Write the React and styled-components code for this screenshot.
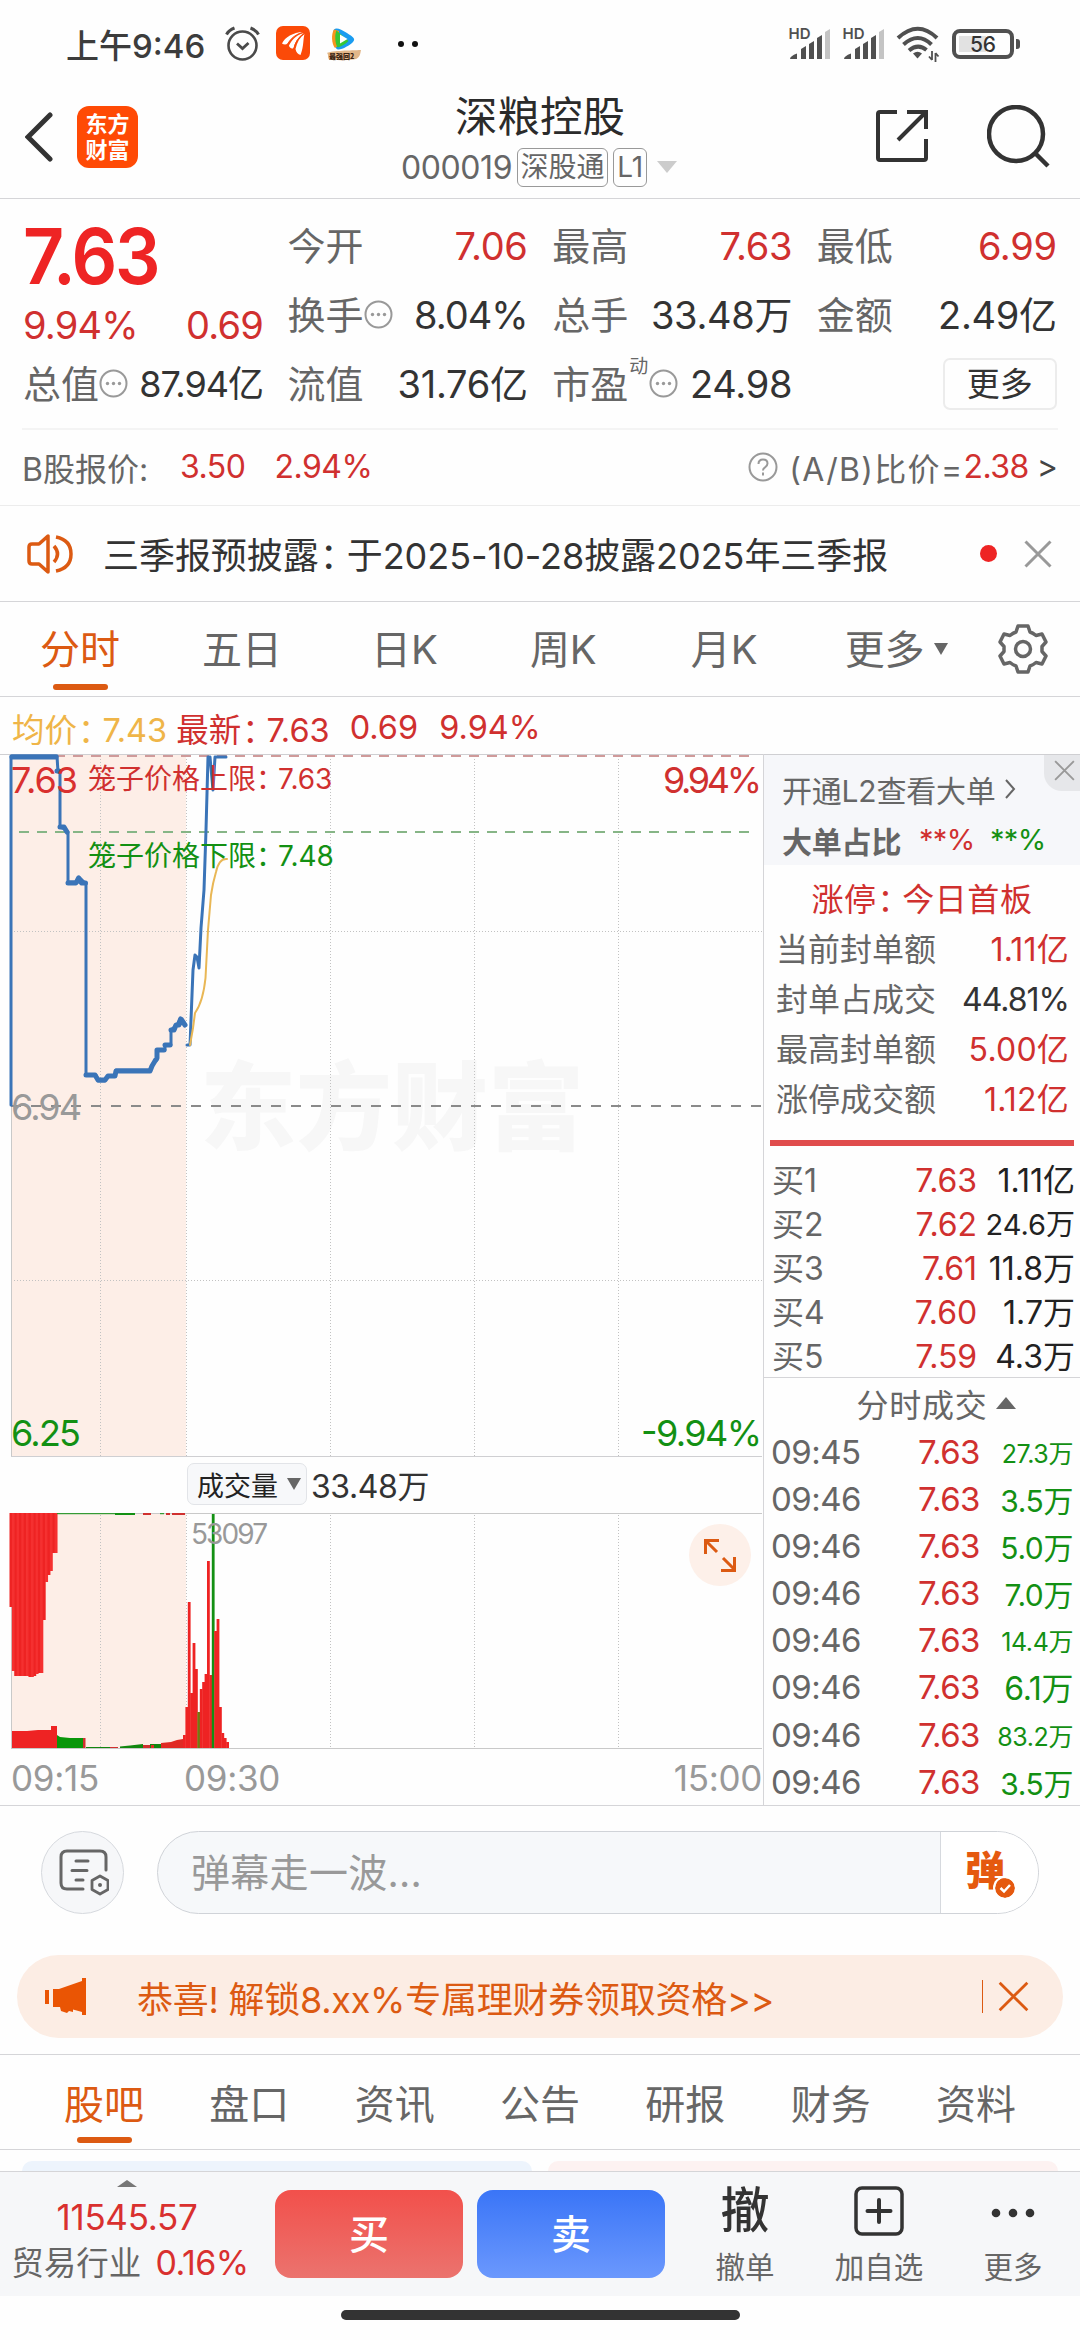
import React from "react";
import styled, { createGlobalStyle, css } from "styled-components";

const RED = "#d0302f";
const GREEN = "#139013";
const ORANGE = "#dc5a12";
const DARK = "#333333";
const GRAY = "#666666";
const LIGHT = "#999999";
const LINE = "#d5d5d8";

const quoteColumns = [
  [
    { label: "今开", value: "7.06", color: RED },
    { label: "换手", value: "8.04%", info: true, tight: true },
    { label: "流值", value: "31.76亿" }
  ],
  [
    { label: "最高", value: "7.63", color: RED },
    { label: "总手", value: "33.48万" },
    { label: "市盈", value: "24.98", info: true, sup: "动" }
  ]
];

const periodTabs = [
  { name: "分时", left: 40, active: true },
  { name: "五日", left: 82 },
  { name: "日K", left: 89 },
  { name: "周K", left: 92 },
  { name: "月K", left: 94 }
];

const sealRows = [
  { label: "当前封单额", value: "1.11亿", color: RED },
  { label: "封单占成交", value: "44.81%", color: DARK, tight: true },
  { label: "最高封单额", value: "5.00亿", color: RED },
  { label: "涨停成交额", value: "1.12亿", color: RED }
];

const buyRows = [
  { label: "买1", price: "7.63", amount: "1.11亿" },
  { label: "买2", price: "7.62", amount: "24.6万", small: true },
  { label: "买3", price: "7.61", amount: "11.8万" },
  { label: "买4", price: "7.60", amount: "1.7万" },
  { label: "买5", price: "7.59", amount: "4.3万" }
];

const tradeRows = [
  { time: "09:45", amount: "27.3万", size: 25 },
  { time: "09:46", amount: "3.5万", size: 30 },
  { time: "09:46", amount: "5.0万", size: 30 },
  { time: "09:46", amount: "7.0万", size: 30 },
  { time: "09:46", amount: "14.4万", size: 25 },
  { time: "09:46", amount: "6.1万", size: 32 },
  { time: "09:46", amount: "83.2万", size: 25 },
  { time: "09:46", amount: "3.5万", size: 30 }
];

const infoTabs = ["股吧", "盘口", "资讯", "公告", "研报", "财务", "资料"];

// [x, top] of the volume bars after the open
const volumeBars = [
  [183, 222],
  [185.4, 194],
  [187.8, 89],
  [190.2, 180],
  [192.6, 130],
  [195, 156],
  [197.4, 199, "#6f7d12"],
  [199.8, 176],
  [202.2, 169],
  [204.6, 161],
  [207, 48],
  [209.4, 162],
  [211.8, 1, GREEN],
  [214.2, 118],
  [216.6, 106],
  [219, 194],
  [221.4, 220],
  [223.8, 225],
  [226.2, 229]
];

// auction bars hanging from the top of the volume chart
const auctionBars = [94, 158, 163, 163, 163, 163, 163, 163, 164, 164, 163, 161, 160, 160, 107, 69, 62, 58, 40, 40];

const gridX = [100, 186, 330, 474, 618];

export default function App() {
  return (
    <Page>
      <GlobalStyle />
      <StatusBar />
      <Header />
      <Quote />
      <Notice />
      <PeriodTabs />
      <ChartSection />
      <Barrage />
      <Banner />
      <InfoTabs />
      <BottomBar />
      <HomeArea>
        <HomeIndicator />
      </HomeArea>
    </Page>
  );
}

const StatusBar = () => (
  <StatusRow>
    <Clock>上午9:46</Clock>
    <StatusIcons>
      <svg width="35" height="35" viewBox="0 0 35 35" fill="none" stroke="#4a4a4a">
        <circle cx="17.5" cy="19.5" r="14" strokeWidth="2.6" />
        <path d="M12 17.5l5.5 5 6-5.5" strokeWidth="2.8" />
        <path d="M1.500 8.500Q4 4 9.500 2M33.500 8.500Q31 4 25.500 2" strokeWidth="3" />
      </svg>
      <svg width="34" height="34" viewBox="0 0 34 34">
        <rect width="34" height="34" rx="7" fill="#fb4a08" />
        <path d="M6 17.500C9 11 17 6.500 27 6c-6 2-12 6-15.500 11.500-1.500 1.500-4 1-5.500 0z" fill="#fff" />
        <path d="M13 19.500C16 13 22 8 28 7c-5 3.500-8.500 8-10.500 15-1.500 1.500-4.500-.5-4.500-2.500z" fill="#fff" />
        <path d="M19.500 23C21 16 24 11 28.500 8c-1.500 5-.5 12-4 21-2.500-.5-4.500-3-5-6z" fill="#fff" />
        <path d="M27 6.500Q16 9 11.500 18.500M28.300 7.500Q20 12 17.800 23" fill="none" stroke="#fb4a08" strokeWidth="1" />
      </svg>
      <svg width="36" height="36" viewBox="0 0 36 36">
        <path d="M8 3.500C10 1 15 3 21 7c6 4 9 5.500 6 9-3 3-11 8-15 7.500S5.500 8 8 3.500z" fill="#1a9cf0" />
        <path d="M8 3.500C5 8 5.500 18 9 22l4-3V5z" fill="#f7941d" />
        <path d="M10.500 4.500c-2 4-1.500 13 1 17 4-1 8-3.500 11-6.500z" fill="#35c635" />
        <path d="M14 8.500v9l7.500-4.500z" fill="#fff" />
        <path d="M1 27c5-2.500 24-2.500 34-3-1 6-2 9-8 9.500-8 1-20 1-24-.5C1 31.500 3 29 1 27z" fill="#e2b789" />
        <text x="3" y="32.500" fontSize="7" fontWeight="900" fill="#3b2412" fontFamily="Noto Sans CJK SC">
          最强回2
        </text>
      </svg>
    </StatusIcons>
    <StatusDots>
      <i />
      <i />
    </StatusDots>
    <StatusRight>
      <Signal />
      <Signal />
      <svg width="44" height="36" viewBox="0 0 44 36" fill="none" stroke="#505050" strokeWidth="4">
        <path d="M2 12Q22-6.500 41 12" />
        <path d="M7.500 18.500Q22 5.500 35.500 18.500" />
        <path d="M13 24.500Q22 17 30.500 24" />
        <path d="M17 27.500q4.500-3.500 9 0l-4.500 5z" fill="#505050" stroke="none" />
        <path d="M36 25v9M39.500 36v-9M36 34l-3-3.500M39.500 27l3 3.500" strokeWidth="1.800" />
      </svg>
      <BatteryWrap>
        <Battery>
          <BatteryLevel />
          <span>56</span>
        </Battery>
        <BatteryTip />
      </BatteryWrap>
    </StatusRight>
  </StatusRow>
);

const Signal = () => (
  <SignalSvg width="42" height="39" viewBox="-1 -6 42 39">
    <text x="-0.5" y="11" fontSize="15" fontWeight="600" fill="#505050" fontFamily="Inter">
      HD
    </text>
    <g fill="#505050">
      <path d="M1 31q0-3 7-5.500v5.500z" />
      <path d="M12 21l5-3v13h-5z" />
      <path d="M20 16l5-3v18h-5z" />
      <path d="M28 10l5-3v24h-5z" />
    </g>
    <path d="M36 4l5-3v30h-5z" fill="#c4c4c4" />
  </SignalSvg>
);

const Header = () => (
  <HeaderRow>
    <HeaderLeft>
      <svg width="28" height="50" viewBox="0 0 28 50" fill="none" stroke={DARK} strokeWidth="5" strokeLinecap="round">
        <path d="M25 3L3 25l22 22" />
      </svg>
      <Logo>
        <span>东方</span>
        <span>财富</span>
      </Logo>
    </HeaderLeft>
    <HeaderCenter>
      <StockName>深粮控股</StockName>
      <StockCode>
        <span>000019</span>
        <Tag $w={91}>深股通</Tag>
        <Tag $w={34}>L1</Tag>
        <Triangle $size={10} $h={12} $color="#cccccc" />
      </StockCode>
    </HeaderCenter>
    <HeaderRight>
      <svg width="54" height="54" viewBox="0 0 54 54" fill="none" stroke={DARK} strokeWidth="4">
        <path d="M22 3H5Q3 3 3 5V49Q3 51 5 51H49Q51 51 51 49V30" />
        <path d="M32 3H51V20M51 3L23 31" />
      </svg>
      <svg width="64" height="64" viewBox="0 0 64 64" fill="none" stroke={DARK} strokeWidth="4.500">
        <circle cx="29" cy="29" r="27" />
        <path d="M48 48L61 61" />
      </svg>
    </HeaderRight>
  </HeaderRow>
);

const MoreInfo = () => (
  <svg width="29" height="29" viewBox="0 0 29 29">
    <circle cx="14.500" cy="14.500" r="13" fill="none" stroke="#999" strokeWidth="2" />
    <circle cx="8.500" cy="14.500" r="1.700" fill="#999" />
    <circle cx="14.500" cy="14.500" r="1.700" fill="#999" />
    <circle cx="20.500" cy="14.500" r="1.700" fill="#999" />
  </svg>
);

const Quote = () => (
  <QuoteBox>
    <QuoteGrid>
      <PriceCol>
        <BigPrice>7.63</BigPrice>
        <Change>
          <span>9.94%</span>
          <span>0.69</span>
        </Change>
        <Metric>
          <Label>
            总值
            <MoreInfo />
          </Label>
          <Value $size={36} $tight>
            87.94亿
          </Value>
        </Metric>
      </PriceCol>
      {quoteColumns.map((col, i) => (
        <MetricCol key={i}>
          {col.map(e => (
            <Metric key={e.label}>
              <Label>
                {e.label}
                {e.sup && <Sup>{e.sup}</Sup>}
                {e.info && <MoreInfo />}
              </Label>
              <Value $color={e.color} $tight={e.tight}>
                {e.value}
              </Value>
            </Metric>
          ))}
        </MetricCol>
      ))}
      <MetricCol>
        <Metric>
          <Label>最低</Label>
          <Value $color={RED}>6.99</Value>
        </Metric>
        <Metric>
          <Label>金额</Label>
          <Value>2.49亿</Value>
        </Metric>
        <Metric $end>
          <MoreButton>更多</MoreButton>
        </Metric>
      </MetricCol>
    </QuoteGrid>
    <BShare>
      <BName>B股报价:</BName>
      <BValue $left={30}>3.50</BValue>
      <BValue $left={29}>2.94%</BValue>
      <BRight>
        <svg width="30" height="30" viewBox="0 0 30 30" fill="none" stroke="#999" strokeWidth="2">
          <circle cx="15" cy="15" r="13.500" />
          <path d="M10.500 12q0-4.500 4.500-4.500t4.500 4q0 2.200-2.500 3.800-2 1.200-2 3.200M15 20.500v3" />
        </svg>
        <b>(A/B)比价=</b>
        <em>2.38</em>
        <span>&gt;</span>
      </BRight>
    </BShare>
  </QuoteBox>
);

const Notice = () => (
  <NoticeRow>
    <svg width="48" height="42" viewBox="0 0 48 42" fill="none" stroke={ORANGE} strokeWidth="3.500" strokeLinejoin="round">
      <path d="M21 3v36l-9-8H5q-3 0-3-3V14q0-3 3-3h7z" />
      <path d="M27 13q7 8 0 16" />
      <path d="M29 4q15 3 15 17T29 38" />
    </svg>
    <NoticeText>
      三季报预披露<Colon>：</Colon>于2025-10-28披露2025年三季报
    </NoticeText>
    <RedDot />
    <CloseIcon size={28} color="#999" width={3} />
  </NoticeRow>
);

const CloseIcon = ({ size, color, width }) => (
  <svg width={size} height={size} viewBox="0 0 28 28" fill="none" stroke={color} strokeWidth={width}>
    <path d="M1.500 1.500L26.500 26.500M26.500 1.500L1.500 26.500" />
  </svg>
);

const PeriodTabs = () => (
  <PeriodRow>
    {periodTabs.map(e => (
      <PeriodTab key={e.name} $left={e.left} $active={e.active}>
        {e.name}
      </PeriodTab>
    ))}
    <PeriodTab $left={87}>更多</PeriodTab>
    <TriangleBox>
      <Triangle $size={7.5} $h={12} $color={GRAY} />
    </TriangleBox>
    <Gear width="50" height="52" viewBox="0 0 50 52" fill="none" stroke={GRAY} strokeWidth="3.500" strokeLinejoin="round">
      <path d="M20 3h10l2 6q3 1 6 3.500l6-1.500 4 8-4 4.500v5l4 4.500-4 8-6-1.500q-3 2.500-6 3.500l-2 6H20l-2-6q-3-1-6-3.500L6 41l-4-8 4-4.500v-5L2 19l4-8 6 1.500Q15 10 18 9z" />
      <circle cx="25" cy="26" r="7.500" />
    </Gear>
  </PeriodRow>
);

const ChartSection = () => (
  <>
    <Legend>
      <LegendText $color="#efb548">
        均价<Colon>：</Colon>7.43
      </LegendText>
      <LegendText $color={RED} $left={9}>
        最新<Colon>：</Colon>7.63
      </LegendText>
      <LegendText $color={RED} $left={20}>
        0.69
      </LegendText>
      <LegendText $color={RED} $left={21}>
        9.94%
      </LegendText>
    </Legend>
    <ChartRow>
      <ChartCol>
        <PriceChart />
        <VolumeHeader>
          <VolumeSelect>
            成交量
            <Triangle $size={7} $h={12} $color={GRAY} />
          </VolumeSelect>
          <VolumeTotal>33.48万</VolumeTotal>
        </VolumeHeader>
        <VolumeChart />
        <TimeAxis>
          <span>09:15</span>
          <span>09:30</span>
          <span>15:00</span>
        </TimeAxis>
      </ChartCol>
      <SidePanel />
    </ChartRow>
  </>
);

// svg y is measured from the top border of the chart (0 = upper limit, 351 = previous close)
const PriceChart = () => (
  <ChartSvg width="763" height="703" viewBox="0 0 763 703">
    <rect x="11" y="0" width="175" height="702" fill="#fdeee7" />
    <text x="200" y="388" fontSize="96" fontWeight="900" fill="#f7f7f7">
      东方财富
    </text>
    <g stroke="#c2c2c2" strokeWidth="1" strokeDasharray="1 2">
      {gridX.map(x => (
        <path key={x} d={`M${x + 0.5} 2V702`} />
      ))}
      <path d="M14 177.500H762M14 526.500H762" />
    </g>
    <path d="M11.500 2V702" stroke="#c9c9c9" />
    <path d="M0 .5H763M11 702.500H762" stroke="#cfcfd2" />
    <path d="M11 352H762" stroke="#8a8a8a" strokeWidth="2" strokeDasharray="10 10" />
    <path d="M19 2H750" stroke="#cf9a9a" strokeWidth="2" strokeDasharray="10 8" />
    <path d="M19 78H750" stroke="#86b586" strokeWidth="2" strokeDasharray="10 8" />
    <g fill="none" stroke="#3a74b8" strokeLinejoin="round" strokeLinecap="round">
      <path
        d="M11 351V2H57L58 18H60V73L65 75L68 78V128H78L79 123L86 130V321H96L98 327H105L108 322H115L116 316H150L155 307L157 306V296H165V291H171V276L177 271L180 264L185 271"
        strokeWidth="3"
      />
      <path
        d="M12 3H56M57 17h2M60 73h4l3 5M68 129h8l2.500-5 3 5h4M86 321h9l3 5h7l3-4h7l1-5h34l2-5 3-5 2-3V296h7M165 291h5M171 276h3l2-5h3l2-6 4 6"
        strokeWidth="5"
      />
      <path d="M187 291H190L193 216L195 201L197 203L199 214L201 174L204 136L206 76L208 3H210L213 36L215 3H226" strokeWidth="3" />
      <path d="M190 291L193 274L195 259Q203 248 205.500 224L208 176L211 141Q213 128 216 118Q219 104 227 105" stroke="#e9b755" strokeWidth="2" />
    </g>
    <text x="11" y="39" fontSize="36" fill="#d9302f" textLength="67">
      7.63
    </text>
    <text x="663" y="39" fontSize="36" fill={RED} textLength="99">
      9.94%
    </text>
    <text x="88" y="35" fontSize="28" fill={RED}>
      笼子价格上限<tspan className="colon">：</tspan>
      <tspan dx="8">7.63</tspan>
    </text>
    <text x="88" y="112" fontSize="28" fill={GREEN}>
      笼子价格下限<tspan className="colon">：</tspan>
      <tspan dx="8">7.48</tspan>
    </text>
    <text x="11" y="366" fontSize="36" fill="#999" textLength="71">
      6.94
    </text>
    <text x="11" y="692" fontSize="36" fill={GREEN} textLength="70">
      6.25
    </text>
    <text x="641" y="692" fontSize="36" fill={GREEN} textLength="121">
      -9.94%
    </text>
  </ChartSvg>
);

const VolumeChart = () => (
  <ChartSvg width="763" height="236" viewBox="0 0 763 236">
    <rect x="11" y="0" width="175" height="235" fill="#fdeee7" />
    <g stroke="#c2c2c2" strokeWidth="1" strokeDasharray="1 2">
      {gridX.map(x => (
        <path key={x} d={`M${x + 0.5} 2V235`} />
      ))}
    </g>
    <path d="M11.500 0V235M11 .5H762M11 235.500H762" stroke="#c9c9c9" />
    {auctionBars.map((h, i) => (
      <rect key={i} x={9.5 + i * 2.37} y="0" width="3" height={h} fill={i % 2 ? "#f53030" : "#ee2323"} />
    ))}
    <path d="M57 .7h58M160 .7h4" stroke={GREEN} />
    <path d="M115 1h20" stroke={GREEN} strokeWidth="2" />
    <path d="M143 1h8M166 1h4M172 1h13" stroke={RED} strokeWidth="2" />
    <path d="M12 235V218H27L38 217H51V213H57V235z" fill="#ee2323" />
    <path d="M57 235V222l3 2 10 1h13v10z" fill="#09960a" />
    <path d="M83 225h2.500v10H83zM110 234h8v1h-8zM143 235v-3h7v3z" fill={RED} />
    <path d="M86 235v-1h24v1zM120 235v-1.500l10-1 13-1.500v4zM150 235v-4h11v4z" fill="#12860f" />
    <path d="M151 235v-3h3v3zM161 235v-5l10-1 6-2 6-1v9z" fill="#e02a24" />
    {volumeBars.map(([x, y, color]) => (
      <rect key={x} x={x} y={y} width="2.8" height={235 - y} fill={color || "#ee2323"} />
    ))}
    <text x="191" y="31" fontSize="28" fill="#999" textLength="77">
      53097
    </text>
    <circle cx="720" cy="42" r="31" fill="#fdf0e9" />
    <path d="M717 39L706 28M705.500 41V27.500H719M723 45L734 56M721 57.500H734.500V44" fill="none" stroke={ORANGE} strokeWidth="3" />
  </ChartSvg>
);

const SidePanel = () => (
  <Side>
    <LevelTwo>
      <LevelLine>
        开通L2查看大单
        <svg width="12" height="20" viewBox="0 0 12 20" fill="none" stroke={GRAY} strokeWidth="2">
          <path d="M2 1l8 9-8 9" />
        </svg>
      </LevelLine>
      <LevelLine>
        <b>大单占比</b>
        <Ratio $color={RED}>**%</Ratio>
        <Ratio $color={GREEN}>**%</Ratio>
      </LevelLine>
      <CloseBadge>
        <CloseIcon size={21} color="#999" width={2.5} />
      </CloseBadge>
    </LevelTwo>
    <SealTitle>
      涨停<Colon>：</Colon>今日首板
    </SealTitle>
    {sealRows.map(e => (
      <SealRow key={e.label}>
        <span>{e.label}</span>
        <SealValue $color={e.color} $tight={e.tight}>
          {e.value}
        </SealValue>
      </SealRow>
    ))}
    <RedBar />
    {buyRows.map(e => (
      <BuyRow key={e.label}>
        <span>{e.label}</span>
        <BuyPrice>{e.price}</BuyPrice>
        <BuyAmount $small={e.small}>{e.amount}</BuyAmount>
      </BuyRow>
    ))}
    <TradeTitle>
      分时成交
      <Triangle $up $size={10} $h={12} $color={GRAY} />
    </TradeTitle>
    {tradeRows.map((e, i) => (
      <TradeRow key={i}>
        <span>{e.time}</span>
        <TradePrice>7.63</TradePrice>
        <TradeAmount $size={e.size}>{e.amount}</TradeAmount>
      </TradeRow>
    ))}
  </Side>
);

const Barrage = () => (
  <BarrageRow>
    <RoundButton>
      <svg width="50" height="48" viewBox="0 0 50 48" fill="none" stroke={GRAY} strokeWidth="3" strokeLinecap="round">
        <path d="M24 40H8q-6 0-6-6V8q0-6 6-6H41q6 0 6 6V21" />
        <path d="M17 12H29M13 21.500H28M17 31H24" />
        <path d="M41 27l8 4.500v9L41 45l-8-4.500v-9z" strokeWidth="2.800" strokeLinejoin="round" />
        <circle cx="41" cy="36" r="2" fill={GRAY} stroke="none" />
      </svg>
    </RoundButton>
    <BarrageInput>
      <Placeholder>弹幕走一波...</Placeholder>
      <BarrageToggle>
        弹
        <svg width="20" height="20" viewBox="0 0 20 20">
          <circle cx="10" cy="10" r="10" fill="#e5590f" />
          <path d="M5.500 10l3.500 3.500 6-6.500" fill="none" stroke="#fff" strokeWidth="2.500" />
        </svg>
      </BarrageToggle>
    </BarrageInput>
  </BarrageRow>
);

const Banner = () => (
  <BannerBox>
    <svg width="42" height="38" viewBox="0 0 42 38" fill="#ea5504">
      <path d="M0 12h4v14H0zM8 11h6L37 3V0h4v37h-4v-3l-9-2.500V34l-4-1-2 2-6-2-1-4H8z" />
    </svg>
    <BannerText>恭喜! 解锁8.xx%专属理财券领取资格&gt;&gt;</BannerText>
    <BannerLine />
    <CloseIcon size={31} color={ORANGE} width={2.5} />
  </BannerBox>
);

const InfoTabs = () => (
  <>
    <InfoRow>
      {infoTabs.map((name, i) => (
        <InfoTab key={name} $active={i === 0}>
          {name}
        </InfoTab>
      ))}
    </InfoRow>
    <CardRow>
      <Card $bg="#edf4fc" />
      <Card $bg="#fdf2f1" />
    </CardRow>
  </>
);

const BottomBar = () => (
  <BottomRow>
    <IndexBox>
      <Triangle $up $size={10} $h={7} $color="#777" />
      <IndexValue>11545.57</IndexValue>
      <IndexName>
        贸易行业 <em>0.16%</em>
      </IndexName>
    </IndexBox>
    <TradeButton $from="#f2504b" $to="#eb736e">
      买
    </TradeButton>
    <TradeButton $from="#3a75f7" $to="#6b98fd">
      卖
    </TradeButton>
    <Action $w={132}>
      <ActionGlyph>撤</ActionGlyph>
      <span>撤单</span>
    </Action>
    <Action $w={136}>
      <svg width="50" height="50" viewBox="0 0 50 50" fill="none" stroke={DARK} strokeWidth="3.500">
        <rect x="2" y="2" width="46" height="46" rx="6" />
        <path d="M25 14V36M13.500 25H36.500" strokeWidth="4" strokeLinecap="round" />
      </svg>
      <span>加自选</span>
    </Action>
    <Action $w={132}>
      <svg width="50" height="50" viewBox="0 0 50 50" fill={DARK}>
        <circle cx="8" cy="27" r="4.300" />
        <circle cx="25" cy="27" r="4.300" />
        <circle cx="42" cy="27" r="4.300" />
      </svg>
      <span>更多</span>
    </Action>
  </BottomRow>
);

const GlobalStyle = createGlobalStyle`
  * {
    box-sizing: border-box;
  }
  body {
    margin: 0;
    background-color: #fefefe;
    font-family: Inter, "Noto Sans CJK SC", sans-serif;
    color: ${DARK};
  }
  svg {
    display: block;
    flex-shrink: 0;
  }
  em, i {
    font-style: normal;
  }
`;

const Page = styled.div`
  display: flex;
  flex-direction: column;
  width: 1080px;
  height: 2340px;
  overflow: hidden;
  white-space: nowrap;
`;

const Triangle = styled.i`
  width: 0;
  height: 0;
  border-left: ${p => p.$size}px solid transparent;
  border-right: ${p => p.$size}px solid transparent;
  ${p =>
    p.$up
      ? css`
          border-bottom: ${p.$h}px solid ${p.$color};
        `
      : css`
          border-top: ${p.$h}px solid ${p.$color};
        `}
`;

const Colon = styled.span`
  margin-left: 0.03em;
  margin-right: 0.25em;
  font-feature-settings: "halt";
`;

const StatusRow = styled.div`
  display: flex;
  align-items: center;
  height: 88px;
  padding: 0 60px 0 66px;
`;

const Clock = styled.div`
  width: 159px;
  font-size: 33px;
  font-weight: 500;
  color: #3c3c3c;
`;

const StatusIcons = styled.div`
  display: flex;
  gap: 16px;
`;

const StatusDots = styled.div`
  display: flex;
  gap: 8px;
  margin-left: 36px;
  i {
    width: 6px;
    height: 6px;
    border-radius: 50%;
    background-color: #111;
  }
`;

const StatusRight = styled.div`
  display: flex;
  align-items: center;
  gap: 12px;
  margin-left: auto;
`;

const SignalSvg = styled.svg`
  margin-bottom: 6px;
`;

const BatteryWrap = styled.div`
  display: flex;
  align-items: center;
  gap: 2px;
`;

const Battery = styled.div`
  display: flex;
  align-items: center;
  justify-content: center;
  position: relative;
  width: 62px;
  height: 30px;
  border: 4px solid #505050;
  border-radius: 8px;
  font-size: 21px;
  font-weight: 500;
  span {
    position: relative;
  }
`;

const BatteryLevel = styled.div`
  position: absolute;
  left: 3px;
  top: 3px;
  width: 27px;
  height: 16px;
  background-color: #e2e2e2;
`;

const BatteryTip = styled.div`
  width: 4px;
  height: 10px;
  border-radius: 0 3px 3px 0;
  background-color: #505050;
`;

const HeaderRow = styled.div`
  display: grid;
  grid-template-columns: 300px 1fr 300px;
  height: 111px;
  border-bottom: 1px solid ${LINE};
`;

const HeaderLeft = styled.div`
  display: flex;
  align-items: center;
  gap: 24px;
  padding: 0 0 13px 25px;
`;

const Logo = styled.div`
  display: flex;
  flex-direction: column;
  align-items: center;
  justify-content: center;
  width: 61px;
  height: 62px;
  border-radius: 12px;
  background-color: #ff4a05;
  color: #fff;
  font-size: 22px;
  font-weight: 700;
  line-height: 26px;
`;

const HeaderCenter = styled.div`
  display: flex;
  flex-direction: column;
  align-items: center;
`;

const StockName = styled.div`
  height: 58px;
  line-height: 58px;
  font-size: 42.5px;
  color: #2b2b2b;
`;

const StockCode = styled.div`
  display: flex;
  align-items: center;
  height: 42px;
  gap: 5px;
  margin-left: -2px;
  font-size: 32px;
  letter-spacing: -0.4px;
  color: ${GRAY};
  i {
    margin-left: 5px;
  }
`;

const Tag = styled.span`
  width: ${p => p.$w}px;
  height: 39px;
  line-height: 36px;
  text-align: center;
  font-size: 28px;
  letter-spacing: 0;
  border: 1px solid #999;
  border-radius: 6px;
`;

const HeaderRight = styled.div`
  display: flex;
  gap: 58px;
  padding: 17px 0 0 95px;
  svg:first-child {
    margin-top: 4px;
  }
`;

const QuoteBox = styled.div`
  height: 307px;
  border-bottom: 1px solid #ececec;
`;

const QuoteGrid = styled.div`
  display: grid;
  grid-template-columns: 240px 240px 240px 240px;
  column-gap: 24.6px;
  margin: 0 22px;
  padding: 12px 0 0 1px;
  height: 231px;
  border-bottom: 2px solid #f4f4f4;
`;

const MetricCol = styled.div`
  display: flex;
  flex-direction: column;
`;

const PriceCol = styled(MetricCol)``;

const BigPrice = styled.div`
  height: 92px;
  line-height: 90px;
  font-size: 77px;
  font-weight: 600;
  letter-spacing: -2.5px;
  color: #ee2424;
  transform: scaleX(0.93);
  transform-origin: 0 50%;
`;

const Change = styled.div`
  display: flex;
  justify-content: space-between;
  height: 46px;
  line-height: 44px;
  font-size: 38px;
  letter-spacing: -0.8px;
  color: ${RED};
`;

const Metric = styled.div`
  display: flex;
  align-items: center;
  justify-content: ${p => (p.$end ? "flex-end" : "space-between")};
  height: 69px;
`;

const Label = styled.div`
  display: flex;
  align-items: center;
  font-size: 38px;
  line-height: 50px;
  color: ${GRAY};
`;

const Sup = styled.span`
  margin: 0 1px;
  padding-bottom: 34px;
  font-size: 19px;
  line-height: 20px;
`;

const Value = styled.div`
  font-size: ${p => p.$size || 38}px;
  line-height: 50px;
  letter-spacing: ${p => (p.$tight ? -1 : -0.3)}px;
  color: ${p => p.$color || DARK};
`;

const MoreButton = styled.div`
  width: 114px;
  height: 52px;
  line-height: 48px;
  text-align: center;
  font-size: 33px;
  border: 2px solid #ececec;
  border-radius: 7px;
`;

const BShare = styled.div`
  display: flex;
  align-items: center;
  height: 73px;
  padding: 0 22px;
  font-size: 32px;
  color: ${GRAY};
`;

const BName = styled.div`
  width: 128px;
`;

const BValue = styled.div`
  margin-left: ${p => p.$left}px;
  letter-spacing: -0.5px;
  color: ${RED};
`;

const BRight = styled.div`
  display: flex;
  align-items: center;
  margin-left: auto;
  b {
    margin-left: 11px;
    font-weight: 400;
    letter-spacing: 1.3px;
  }
  em {
    letter-spacing: -0.5px;
    color: ${RED};
  }
  span {
    margin-left: 8px;
    color: #444;
  }
`;

const NoticeRow = styled.div`
  display: flex;
  align-items: center;
  height: 96px;
  padding: 0 28px 0 27px;
  border-bottom: 1px solid ${LINE};
`;

const NoticeText = styled.div`
  flex: 1;
  margin-left: 28px;
  padding-bottom: 2px;
  font-size: 36px;
  letter-spacing: -0.05px;
`;

const RedDot = styled.div`
  width: 17px;
  height: 17px;
  margin-right: 27px;
  border-radius: 50%;
  background-color: #ee2424;
`;

const PeriodRow = styled.div`
  display: flex;
  align-items: center;
  height: 95px;
  border-bottom: 1px solid ${LINE};
`;

const tabLine = css`
  &::after {
    content: "";
    position: absolute;
    left: 50%;
    bottom: 6px;
    width: 55px;
    height: 6px;
    margin-left: -27px;
    border-radius: 3px;
    background-color: ${ORANGE};
  }
`;

const PeriodTab = styled.div`
  position: relative;
  height: 94px;
  margin-left: ${p => p.$left}px;
  line-height: 96px;
  font-size: 40px;
  color: ${p => (p.$active ? ORANGE : GRAY)};
  ${p => p.$active && tabLine}
`;

const TriangleBox = styled.div`
  display: flex;
  margin-left: 9px;
`;

const Gear = styled.svg`
  margin-left: auto;
  margin-right: 32px;
`;

const Legend = styled.div`
  display: flex;
  align-items: center;
  height: 57px;
  padding: 4px 0 0 12px;
`;

const LegendText = styled.div`
  margin-left: ${p => p.$left || 0}px;
  font-size: 32.5px;
  color: ${p => p.$color};
`;

const ChartRow = styled.div`
  display: flex;
  height: 1052px;
  border-bottom: 1px solid ${LINE};
`;

const ChartCol = styled.div`
  width: 763px;
`;

const ChartSvg = styled.svg`
  font-family: Inter, "Noto Sans CJK SC", sans-serif;
  .colon {
    font-feature-settings: "halt";
  }
`;

const VolumeHeader = styled.div`
  display: flex;
  align-items: center;
  height: 56px;
  padding: 0 0 2px 187px;
`;

const VolumeSelect = styled.div`
  display: flex;
  align-items: center;
  gap: 9px;
  width: 120px;
  height: 42px;
  padding-left: 9px;
  font-size: 27px;
  color: #222;
  border: 1px solid #e2e4e8;
  border-radius: 7px;
  background-color: #f7f8fa;
`;

const VolumeTotal = styled.div`
  margin-left: 4px;
  font-size: 32px;
  letter-spacing: -0.4px;
`;

const TimeAxis = styled.div`
  display: grid;
  grid-template-columns: 173px 1fr auto;
  height: 56px;
  padding: 0 1px 0 11px;
  line-height: 58px;
  font-size: 35px;
  letter-spacing: -0.3px;
  color: ${LIGHT};
`;

const Side = styled.div`
  display: flex;
  flex-direction: column;
  width: 317px;
  border-left: 1px solid ${LINE};
`;

const LevelTwo = styled.div`
  position: relative;
  height: 111px;
  padding: 8px 0 0 18px;
  border-top: 1px solid #cfcfd2;
  background-color: #f6f7fa;
`;

const LevelLine = styled.div`
  display: flex;
  align-items: center;
  height: 51px;
  font-size: 30px;
  letter-spacing: -0.2px;
  color: ${GRAY};
  svg {
    margin-left: 8px;
  }
  b {
    width: 137px;
  }
`;

const Ratio = styled.span`
  width: 71px;
  font-size: 29px;
  letter-spacing: -0.7px;
  color: ${p => p.$color};
`;

const CloseBadge = styled.div`
  position: absolute;
  top: 0;
  right: 0;
  display: flex;
  justify-content: flex-end;
  width: 36px;
  height: 36px;
  padding: 5px 5px 0 0;
  border-bottom-left-radius: 18px;
  background-color: #e6e7ea;
`;

const SealTitle = styled.div`
  height: 60px;
  padding-top: 8px;
  line-height: 54px;
  text-align: center;
  font-size: 32px;
  letter-spacing: 0.6px;
  color: ${RED};
`;

const SealRow = styled.div`
  display: flex;
  justify-content: space-between;
  height: 50px;
  padding: 0 11px 0 12px;
  line-height: 50px;
  font-size: 32px;
  color: ${GRAY};
`;

const SealValue = styled.span`
  letter-spacing: ${p => (p.$tight ? -1 : 0.2)}px;
  color: ${p => p.$color};
`;

const RedBar = styled.div`
  height: 6px;
  margin: 15px 6px 13px;
  background-color: #e04c4c;
`;

const BuyRow = styled.div`
  display: flex;
  height: 44px;
  padding: 0 5px 0 8px;
  line-height: 44px;
  font-size: 32px;
  color: ${GRAY};
  span:first-child {
    flex: 1;
  }
`;

const BuyPrice = styled.span`
  letter-spacing: -0.1px;
  color: ${RED};
`;

const BuyAmount = styled.span`
  width: 98px;
  text-align: right;
  font-size: ${p => (p.$small ? 29 : 32)}px;
  letter-spacing: 0;
  color: #222;
`;

const TradeTitle = styled.div`
  display: flex;
  align-items: center;
  justify-content: center;
  gap: 9px;
  height: 50px;
  margin-top: -2px;
  padding: 1px 0 0 29px;
  border-top: 1px solid ${LINE};
  font-size: 32px;
  letter-spacing: 0.7px;
  color: ${GRAY};
`;

const TradeRow = styled.div`
  display: flex;
  height: 47.1px;
  padding: 0 7px 0 7px;
  line-height: 51px;
  font-size: 33px;
  letter-spacing: -0.5px;
  color: ${GRAY};
  span:first-child {
    flex: 1;
  }
`;

const TradePrice = styled.span`
  color: ${RED};
`;

const TradeAmount = styled.span`
  width: 93px;
  text-align: right;
  font-size: ${p => p.$size}px;
  letter-spacing: -0.4px;
  line-height: 54px;
  color: ${GREEN};
`;

const BarrageRow = styled.div`
  display: flex;
  height: 149px;
  padding: 25px 41px 0 41px;
`;

const RoundButton = styled.div`
  display: flex;
  align-items: center;
  justify-content: center;
  width: 83px;
  height: 83px;
  padding-left: 2px;
  border: 1px solid #d6d9de;
  border-radius: 50%;
  background-color: #f6f7f9;
`;

const BarrageInput = styled.div`
  display: flex;
  flex: 1;
  height: 83px;
  margin-left: 33px;
  border: 1px solid #d0d3d8;
  border-radius: 42px;
  overflow: hidden;
  background-color: #f6f8fa;
`;

const Placeholder = styled.div`
  flex: 1;
  padding-left: 33px;
  line-height: 82px;
  font-size: 39px;
  letter-spacing: 0.3px;
  color: ${LIGHT};
`;

const BarrageToggle = styled.div`
  position: relative;
  width: 98px;
  padding-left: 24px;
  line-height: 78px;
  font-size: 40px;
  font-weight: 900;
  color: #e5590f;
  border-left: 1px solid #d6d9de;
  background-color: #fff;
  svg {
    position: absolute;
    left: 54px;
    top: 46px;
    border-radius: 50%;
    box-shadow: 0 0 0 2px #fff;
  }
`;

const BannerBox = styled.div`
  display: flex;
  align-items: center;
  height: 83px;
  margin: 0 17px 16px;
  padding: 0 34px 0 28px;
  border-radius: 42px;
  background-color: #fcede4;
`;

const BannerText = styled.div`
  flex: 1;
  margin-left: 50px;
  font-size: 36px;
  letter-spacing: -0.25px;
  color: ${ORANGE};
`;

const BannerLine = styled.div`
  width: 1px;
  height: 33px;
  margin-right: 15px;
  background-color: ${ORANGE};
`;

const InfoRow = styled.div`
  display: flex;
  justify-content: space-between;
  height: 96px;
  padding: 0 64px;
  border-top: 1px solid ${LINE};
  border-bottom: 1px solid ${LINE};
`;

const InfoTab = styled.div`
  position: relative;
  line-height: 99px;
  font-size: 40px;
  color: ${p => (p.$active ? ORANGE : GRAY)};
  ${p => p.$active && tabLine}
`;

const CardRow = styled.div`
  display: flex;
  gap: 16px;
  height: 21px;
  padding: 11px 22px 0;
`;

const Card = styled.div`
  flex: 1;
  border-radius: 12px 12px 0 0;
  background-color: ${p => p.$bg};
`;

const BottomRow = styled.div`
  display: flex;
  height: 125px;
  border-top: 1px solid ${LINE};
  background-color: #f6f7f9;
`;

const IndexBox = styled.div`
  display: flex;
  flex-direction: column;
  align-items: center;
  width: 254px;
  margin-right: 21px;
  padding-top: 8px;
`;

const IndexValue = styled.div`
  height: 52px;
  padding-top: 4px;
  line-height: 52px;
  font-size: 35px;
  letter-spacing: -0.3px;
  color: #d9302f;
`;

const IndexName = styled.div`
  height: 46px;
  padding-left: 6px;
  line-height: 48px;
  font-size: 32.5px;
  color: ${GRAY};
  em {
    margin-left: 5px;
    font-size: 34px;
    letter-spacing: -0.5px;
    color: #d9302f;
  }
`;

const TradeButton = styled.div`
  width: 188px;
  height: 88px;
  margin: 18px 14px 0 0;
  border-radius: 16px;
  line-height: 89px;
  text-align: center;
  font-size: 40px;
  font-weight: 500;
  color: #fff;
  background: linear-gradient(${p => p.$from}, ${p => p.$to});
`;

const Action = styled.div`
  display: flex;
  flex-direction: column;
  align-items: center;
  width: ${p => p.$w}px;
  padding-top: 14px;
  span {
    margin-top: 9px;
    line-height: 44px;
    font-size: 29.5px;
    color: ${GRAY};
  }
`;

const ActionGlyph = styled.div`
  height: 50px;
  line-height: 50px;
  font-size: 49px;
  font-weight: 500;
`;

const HomeArea = styled.div`
  flex: 1;
  display: flex;
  justify-content: center;
  padding-top: 14px;
`;

const HomeIndicator = styled.div`
  width: 399px;
  height: 10px;
  border-radius: 5px;
  background-color: #333;
`;
